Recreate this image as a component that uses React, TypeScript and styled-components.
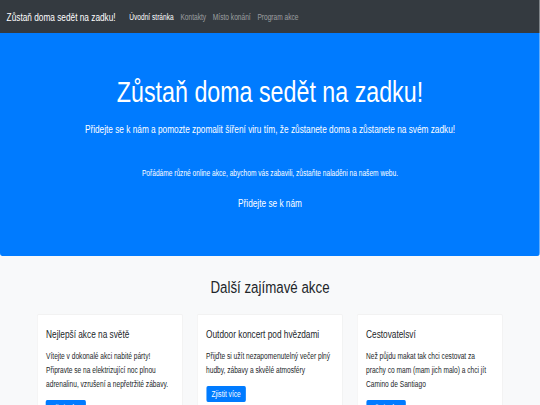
import React from "react";
import styled, { createGlobalStyle } from "styled-components";

/* The reference is a 1300x768 page squeezed into 540x405: text is narrower
   than it is tall. The page is laid out at its natural width and then
   scaled horizontally to reproduce that squeeze. */
const SQUEEZE = 0.788;

const GlobalStyle = createGlobalStyle`
  html, body {
    margin: 0;
    padding: 0;
    overflow: hidden;
    background: #f8f9fa;
    font-family: "Liberation Sans", Arial, Helvetica, sans-serif;
    color: #212529;
  }
  * { box-sizing: border-box; }
`;

const Page = styled.div`
  width: ${540 / SQUEEZE}px;
  height: 405px;
  overflow: hidden;
  display: flex;
  flex-direction: column;
  background: #f8f9fa;
  transform: scaleX(${SQUEEZE});
  transform-origin: 0 0;
`;

const Navbar = styled.nav`
  flex: 0 0 33px;
  background: #343a40;
  display: flex;
  align-items: center;
  padding: 0 8.4px;
`;

const Brand = styled.a`
  color: #fff;
  font-size: 10.5px;
  line-height: 14px;
  margin-right: 13px;
  text-decoration: none;
  white-space: nowrap;
`;

const NavList = styled.div`
  display: flex;
`;

const NavLink = styled.a<{ $active?: boolean }>`
  padding: 0 4.3px;
  font-size: 8.4px;
  line-height: 12px;
  color: ${(p) => (p.$active ? "#ffffff" : "rgba(255,255,255,0.5)")};
  text-decoration: none;
  white-space: nowrap;
`;

const Hero = styled.header`
  flex: 0 0 223px;
  background: #007bff;
  color: #fff;
  display: flex;
  flex-direction: column;
  align-items: center;
  padding-top: 41px;
  text-align: center;
  border-radius: 0 0 3px 3px;
`;

const HeroTitle = styled.h1`
  margin: 0;
  font-weight: 300;
  font-size: 29.5px;
  line-height: 36px;
`;

const Lead = styled.p`
  margin: 11px 0 0;
  font-size: 10.5px;
  line-height: 16px;
`;

const HeroText = styled.p`
  margin: 29px 0 0;
  font-size: 8.4px;
  line-height: 14px;
`;

const HeroLink = styled.a`
  margin-top: 15px;
  font-size: 10.5px;
  line-height: 16px;
  color: #fff;
  text-decoration: none;
`;

const Section = styled.section`
  display: flex;
  flex-direction: column;
  align-items: center;
  padding-top: 22px;
`;

const SectionTitle = styled.h2`
  margin: 0;
  font-weight: 400;
  font-size: 16.9px;
  line-height: 20px;
  color: #212529;
`;

const CardRow = styled.div`
  margin-top: 16px;
  display: grid;
  grid-template-columns: repeat(3, ${146 / SQUEEZE}px);
  gap: ${14 / SQUEEZE}px;
  align-items: start;
`;

const Card = styled.div`
  background: #fff;
  border: 1px solid rgba(0, 0, 0, 0.05);
  border-radius: 2px;
  padding: 11px 10.5px 10px;
  min-height: 110px;
`;

const CardTitle = styled.h5`
  margin: 0;
  font-weight: 400;
  font-size: 10.5px;
  line-height: 16px;
  color: #212529;
`;

const CardText = styled.p`
  margin: 7px 0 0;
  font-size: 8.4px;
  line-height: 14px;
  color: #212529;
`;

const Button = styled.a`
  display: inline-block;
  margin-top: 9px;
  width: ${40 / SQUEEZE}px;
  height: 16px;
  line-height: 16px;
  text-align: center;
  background: #007bff;
  color: #fff;
  border-radius: 2px;
  font-size: 8.4px;
  text-decoration: none;
`;

const cards = [
  {
    title: "Nejlepší akce na světě",
    text: "Vítejte v dokonalé akci nabité párty! Připravte se na elektrizující noc plnou adrenalinu, vzrušení a nepřetržité zábavy.",
  },
  {
    title: "Outdoor koncert pod hvězdami",
    text: "Přijďte si užít nezapomenutelný večer plný hudby, zábavy a skvělé atmosféry",
  },
  {
    title: "Cestovatelsví",
    text: "Než půjdu makat tak chci cestovat za prachy co mam (mam jich malo) a chci jít Camino de Santiago",
  },
];

export default function App() {
  return (
    <>
      <GlobalStyle />
      <Page>
        <Navbar>
          <Brand href="#">Zůstaň doma sedět na zadku!</Brand>
          <NavList>
            <NavLink $active href="#">Úvodní stránka</NavLink>
            <NavLink href="#">Kontakty</NavLink>
            <NavLink href="#">Místo konání</NavLink>
            <NavLink href="#">Program akce</NavLink>
          </NavList>
        </Navbar>
        <Hero>
          <HeroTitle>Zůstaň doma sedět na zadku!</HeroTitle>
          <Lead>Přidejte se k nám a pomozte zpomalit šíření viru tím, že zůstanete doma a zůstanete na svém zadku!</Lead>
          <HeroText>Pořádáme různé online akce, abychom vás zabavili, zůstaňte naladěni na našem webu.</HeroText>
          <HeroLink href="#">Přidejte se k nám</HeroLink>
        </Hero>
        <Section>
          <SectionTitle>Další zajímavé akce</SectionTitle>
          <CardRow>
            {cards.map((c) => (
              <Card key={c.title}>
                <CardTitle>{c.title}</CardTitle>
                <CardText>{c.text}</CardText>
                <Button href="#">Zjistit více</Button>
              </Card>
            ))}
          </CardRow>
        </Section>
      </Page>
    </>
  );
}
